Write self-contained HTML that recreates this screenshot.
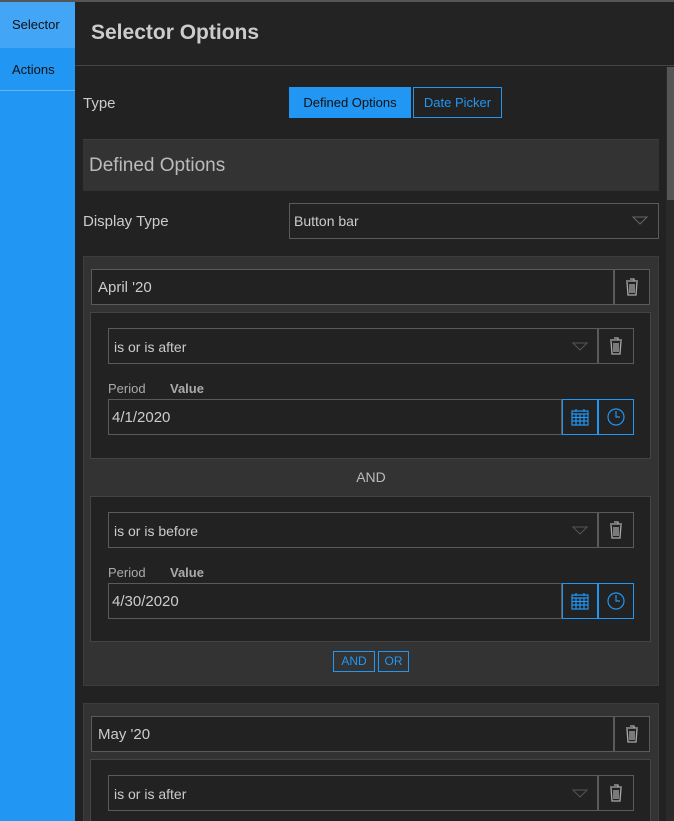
<!DOCTYPE html><html><head><style>
*{box-sizing:border-box;margin:0;padding:0}
html,body{width:674px;height:821px;overflow:hidden}
body{background:#222;font-family:"Liberation Sans",sans-serif;color:#ccc;position:relative}
.a{position:absolute}
.side{left:0;top:0;width:75px;height:819px;background:#2196f3}
.tab{left:0;width:75px;font-size:13px;color:#111;padding-left:12px}
.box{border:1px solid #5a5a5a;background:#222}
.t{font-size:14px;color:#ccc}
.tr{border:1px solid #5a5a5a;background:#222}
.bb{border:1px solid #2196f3}
#wrap{position:absolute;left:0;top:0;width:674px;height:821px;overflow:hidden}
</style></head><body><div id="wrap">
<div class="a" style="left:0;top:0;width:674px;height:2px;background:#555"></div>
<div class="a side" style="top:2px"></div>
<div class="a tab" style="top:2px;height:46px;background:#42a5f5;line-height:46px">Selector</div>
<div class="a tab" style="top:48px;height:43px;line-height:43px;border-bottom:1px solid #64b5f6">Actions</div>
<div class="a" style="left:75px;top:2px;width:599px;height:64px;background:#232323;border-bottom:1px solid #444"></div>
<div class="a" style="left:91px;top:21px;font-size:21px;font-weight:bold;color:#ccc">Selector Options</div>
<div class="a" style="left:666px;top:67px;width:8px;height:754px;background:#2a2a2a"></div>
<div class="a" style="left:667px;top:67px;width:7px;height:133px;background:#555"></div>
<div class="a t" style="left:83px;top:95px;font-size:15px">Type</div>
<div class="a" style="left:289px;top:87px;width:122px;height:31px;background:#2196f3;color:#111;font-size:13px;text-align:center;line-height:31px">Defined Options</div>
<div class="a bb" style="left:413px;top:87px;width:89px;height:31px;color:#2196f3;font-size:13px;text-align:center;line-height:29px">Date Picker</div>
<div class="a" style="left:83px;top:139px;width:576px;height:52px;background:#333;border-top:1px solid #3d3d3d"></div>
<div class="a" style="left:89px;top:155px;font-size:19px;color:#bbb">Defined Options</div>
<div class="a t" style="left:83px;top:213px;font-size:15px">Display Type</div>
<div class="a box" style="left:289px;top:203px;width:370px;height:36px"></div>
<div class="a t" style="left:294px;top:213px">Button bar</div>
<svg class="a" style="left:632px;top:216px" width="16" height="10"><path d="M1 1h14L8 8z" fill="none" stroke="#666"/></svg>
<div class="a" style="left:83px;top:256px;width:576px;height:430px;background:#333;border:1px solid #3c3c3c"></div>
<div class="a" style="left:83px;top:703px;width:576px;height:130px;background:#333;border:1px solid #3c3c3c"></div>
<div id="x"></div>
</div>
<script>
function trash(x,y){return `<div class="a tr" style="left:${x}px;top:${y}px;width:36px;height:36px"></div><svg class="a" style="left:${x+10}px;top:${y+8}px" width="16" height="20"><path d="M2 4h12M6 2h4v2M3 5l1 13h8l1-13M6 7v9M8 7v9M10 7v9" fill="none" stroke="#aaa" stroke-width="1.3"/></svg>`}
function sel(y,txt){return `<div class="a box" style="left:108px;top:${y}px;width:490px;height:36px"></div><div class="a t" style="left:114px;top:${y+11}px">${txt}</div><svg class="a" style="left:572px;top:${y+14}px" width="16" height="10"><path d="M1 1h14L8 8z" fill="none" stroke="#555"/></svg>`+trash(598,y)}
function name(y,txt){return `<div class="a box" style="left:91px;top:${y}px;width:523px;height:36px"></div><div class="a t" style="left:98px;top:${y+10}px;font-size:15px">${txt}</div>`+trash(614,y)}
function cond(y,txt,date,h){return `<div class="a" style="left:90px;top:${y}px;width:561px;height:${h}px;background:#222;border:1px solid #444"></div>`+sel(y+16,txt)+
(date?`<div class="a t" style="left:108px;top:${y+69}px;font-size:13px;color:#aaa">Period</div><div class="a" style="left:170px;top:${y+69}px;font-size:13px;font-weight:bold;color:#aaa">Value</div>
<div class="a box" style="left:108px;top:${y+87}px;width:454px;height:36px"></div><div class="a t" style="left:112px;top:${y+97}px;font-size:15px">${date}</div>
<div class="a bb" style="left:562px;top:${y+87}px;width:36px;height:36px"></div><div class="a bb" style="left:598px;top:${y+87}px;width:36px;height:36px"></div>
<svg class="a" style="left:570px;top:${y+95}px" width="20" height="20"><path d="M2 4h16v14H2zM2 7h16M2 10.5h16M2 14h16M6 7v11M10 7v11M14 7v11M6 2v3M14 2v3" fill="none" stroke="#2196f3" stroke-width="1.2"/></svg>
<svg class="a" style="left:606px;top:${y+95}px" width="20" height="20"><circle cx="10" cy="10" r="8" fill="none" stroke="#2196f3" stroke-width="1.2"/><path d="M10 4v6h4" fill="none" stroke="#2196f3" stroke-width="1.2"/></svg>`:'')}
let h=name(269,"April '20")+cond(312,"is or is after","4/1/2020",147)+
`<div class="a" style="left:83px;top:469px;width:576px;text-align:center;font-size:14px;color:#bbb">AND</div>`+
cond(496,"is or is before","4/30/2020",146)+
`<div class="a bb" style="left:333px;top:651px;width:42px;height:21px;color:#2196f3;font-size:12px;text-align:center;line-height:19px">AND</div><div class="a bb" style="left:378px;top:651px;width:31px;height:21px;color:#2196f3;font-size:12px;text-align:center;line-height:19px">OR</div>`+
name(716,"May '20")+cond(759,"is or is after",null,80);
document.getElementById('x').innerHTML=h;
</script>
</body></html>
